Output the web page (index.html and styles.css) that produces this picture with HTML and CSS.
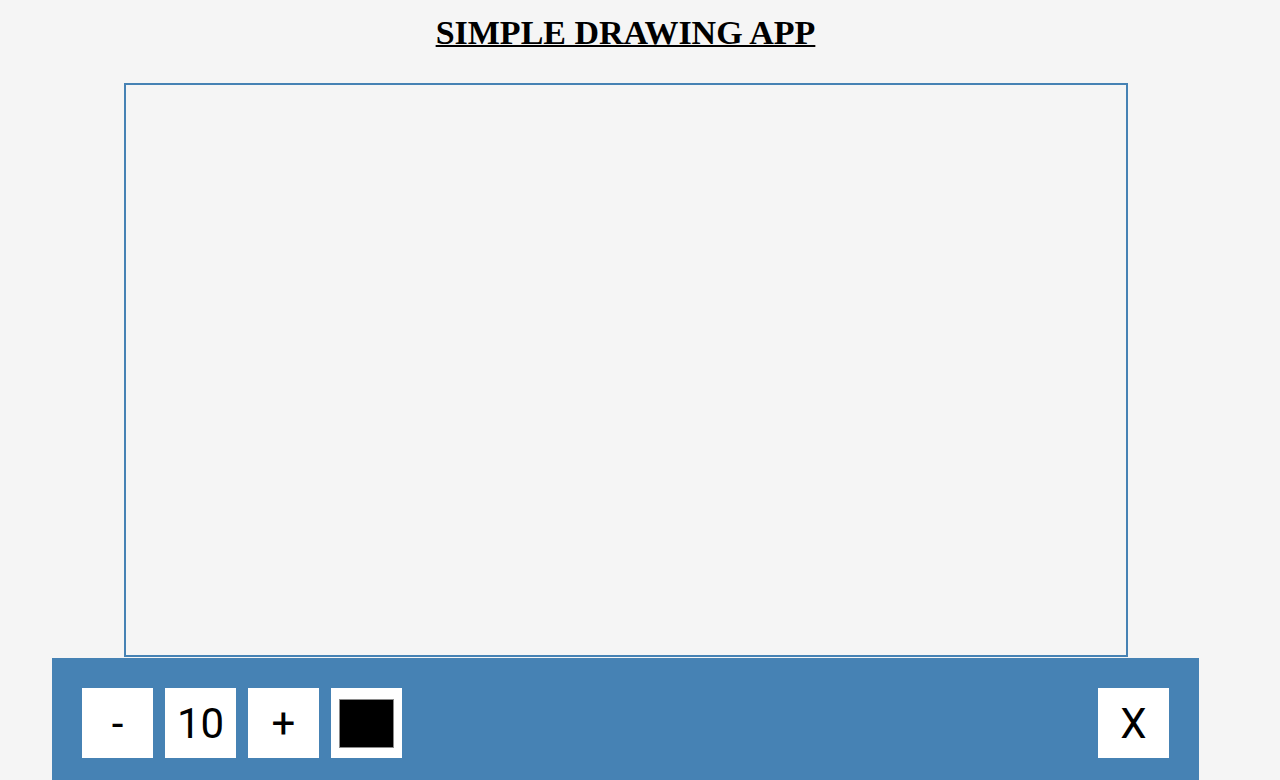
FILE: index.html
```html
<!DOCTYPE html>
<html lang="en">
<head>
<meta charset="utf-8">
<title>Simple Drawing App</title>
<link rel="stylesheet" href="styles.css">
</head>
<body>
<div class="page">
  <h1 class="title">SIMPLE DRAWING APP</h1>
  <div class="canvas"></div>
  <div class="toolbox">
    <button class="tool">-</button>
    <span class="tool size">10</span>
    <button class="tool">+</button>
    <span class="tool colour"><span class="swatch"></span></span>
    <button class="tool clear">X</button>
  </div>
</div>
</body>
</html>
```
FILE: styles.css
```css
html, body {
  margin: 0;
  padding: 0;
  background: #f5f5f5;
  overflow: hidden;
  height: 780px;
}
.page {
  width: 1251px;
  display: flex;
  flex-direction: column;
  align-items: center;
}
.title {
  margin: 13px 0 0;
  font-family: "Liberation Serif", "Times New Roman", serif;
  font-weight: bold;
  font-size: 34px;
  line-height: 39px;
  text-decoration: underline;
  text-decoration-thickness: 2px;
  color: #000;
}
.canvas {
  margin-top: 31px;
  width: 1000px;
  height: 570px;
  border: 2px solid #4682b4;
  background: #f5f5f5;
}
.toolbox {
  margin-top: 1px;
  width: 1087px;
  padding: 30px 30px 22px;
  background: #4682b4;
  display: flex;
  gap: 12px;
}
.tool {
  width: 71px;
  height: 70px;
  box-sizing: border-box;
  background: #fff;
  border: none;
  padding: 0;
  margin: 0;
  display: flex;
  align-items: center;
  justify-content: center;
  font-family: Roboto, "Noto Sans", sans-serif;
  font-size: 42px;
  color: #000;
}
.colour {
  padding: 11px 8px 10px;
}
.swatch {
  width: 55px;
  height: 49px;
  box-sizing: border-box;
  border: 1px solid #8a8a8a;
  background: #000;
}
.clear {
  margin-left: auto;
}
```
